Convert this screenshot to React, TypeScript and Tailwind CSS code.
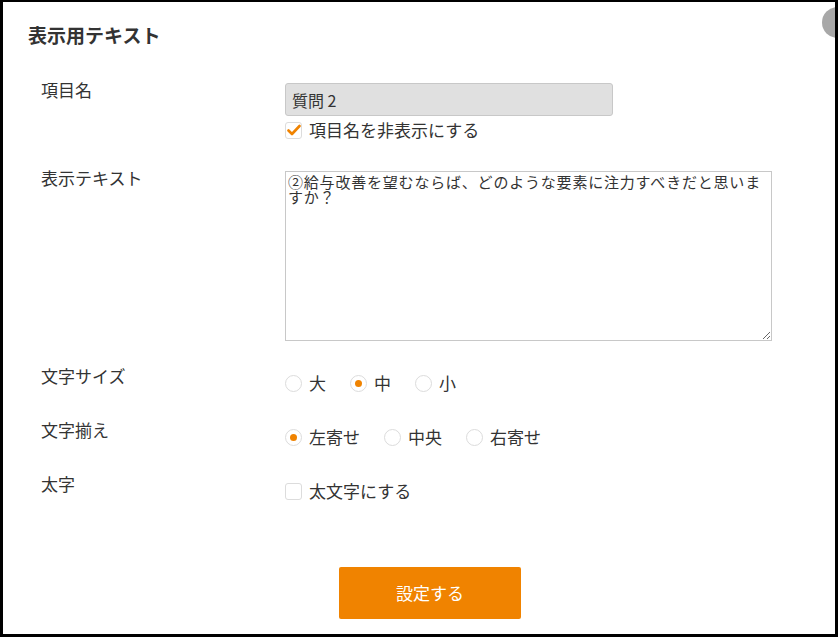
import React from "react";

const font = { fontFamily: '"Noto Sans CJK JP", "Noto Sans", sans-serif' };

function Radio({ checked, label }: { checked?: boolean; label: string }) {
  return (
    <div className="flex items-center mr-[24px]">
      <span className="w-[17px] h-[17px] rounded-full border border-[#dcdcdc] bg-white flex items-center justify-center">
        {checked && <span className="w-[7px] h-[7px] rounded-full bg-[#f08300]" />}
      </span>
      <span className="ml-[7px] text-[17px] leading-[24px] text-[#333]">{label}</span>
    </div>
  );
}

function Checkbox({ checked, label }: { checked?: boolean; label: string }) {
  return (
    <div className="flex items-center">
      <span className="w-[17px] h-[17px] rounded-[3px] border border-[#dcdcdc] bg-white flex items-center justify-center">
        {checked && (
          <svg width="14" height="12" viewBox="0 0 14 12">
            <path d="M1.5 6.5 L5 10 L12.5 2" fill="none" stroke="#f08300" strokeWidth="2.6" strokeLinecap="round" strokeLinejoin="round" />
          </svg>
        )}
      </span>
      <span className="ml-[7px] text-[17px] leading-[24px] text-[#333]">{label}</span>
    </div>
  );
}

export default function App() {
  return (
    <div
      className="relative w-[838px] h-[637px] bg-white border-t-2 border-l-[3px] border-r-[3px] border-b-[3px] border-black overflow-hidden"
      style={font}
    >
      <div className="absolute right-[-18px] top-[5px] w-[31px] h-[31px] rounded-full bg-[#a8a8a8]" />
      <div className="pl-[25px] pt-[20px]">
        <h1 className="text-[19px] leading-[26px] font-bold text-[#333]">表示用テキスト</h1>
      </div>
      <div className="pl-[38px] flex flex-col">
        <div className="flex mt-[30px]">
          <div className="w-[244px] text-[17px] leading-[24px] text-[#333]">項目名</div>
          <div className="pt-[5px] flex flex-col">
            <div className="w-[328px] h-[33px] bg-[#e0e0e0] border border-[#c8c8c8] rounded-[3px] pl-[6px] flex items-center text-[16px] text-[#333]">
              質問 2
            </div>
            <div className="mt-[2px]">
              <Checkbox checked label="項目名を非表示にする" />
            </div>
          </div>
        </div>
        <div className="flex mt-[24px]">
          <div className="w-[244px] text-[17px] leading-[24px] text-[#333]">表示テキスト</div>
          <div className="pt-[5px]">
            <textarea
              readOnly
              defaultValue="②給与改善を望むならば、どのような要素に注力すべきだと思いますか？"
              className="block w-[487px] h-[170px] border border-[#c8c8c8] bg-white px-[2px] py-[2px] text-[15px] leading-[15px] tracking-[0.8px] text-[#333] outline-none resize"
              style={font}
            />
          </div>
        </div>
        <div className="flex mt-[23px]">
          <div className="w-[244px] text-[17px] leading-[24px] text-[#333]">文字サイズ</div>
          <div className="pt-[7px] flex">
            <Radio label="大" />
            <Radio checked label="中" />
            <Radio label="小" />
          </div>
        </div>
        <div className="flex mt-[23px]">
          <div className="w-[244px] text-[17px] leading-[24px] text-[#333]">文字揃え</div>
          <div className="pt-[7px] flex">
            <Radio checked label="左寄せ" />
            <Radio label="中央" />
            <Radio label="右寄せ" />
          </div>
        </div>
        <div className="flex mt-[23px]">
          <div className="w-[244px] text-[17px] leading-[24px] text-[#333]">太字</div>
          <div className="pt-[7px]">
            <Checkbox label="太文字にする" />
          </div>
        </div>
      </div>
      <div className="mt-[64px] pl-[336px]">
        <button className="w-[182px] h-[52px] bg-[#f08300] rounded-[2px] text-white text-[17px]" style={font}>
          設定する
        </button>
      </div>
    </div>
  );
}
